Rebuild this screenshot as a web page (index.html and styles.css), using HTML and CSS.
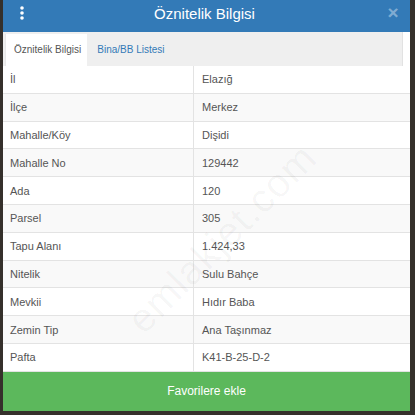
FILE: index.html
```html
<!DOCTYPE html>
<html lang="tr">
<head>
<meta charset="utf-8">
<link rel="stylesheet" href="styles.css">
</head>
<body>
<div class="modal">
  <div class="header">
    <svg class="kebab" width="8" height="14" viewBox="0 0 8 14"><circle cx="4" cy="2" r="1.8" fill="#fff"/><circle cx="4" cy="7" r="1.8" fill="#fff"/><circle cx="4" cy="12" r="1.8" fill="#fff"/></svg>
    <div class="title">Öznitelik Bilgisi</div>
    <div class="close">×</div>
  </div>
  <div class="tabs">
    <div class="tab active">Öznitelik Bilgisi</div>
    <div class="tab">Bina/BB Listesi</div>
  </div>
  <div class="table">
    <div class="row"><div class="k">İl</div><div class="v">Elazığ</div></div>
    <div class="row"><div class="k">İlçe</div><div class="v">Merkez</div></div>
    <div class="row"><div class="k">Mahalle/Köy</div><div class="v">Dişidi</div></div>
    <div class="row"><div class="k">Mahalle No</div><div class="v">129442</div></div>
    <div class="row"><div class="k">Ada</div><div class="v">120</div></div>
    <div class="row"><div class="k">Parsel</div><div class="v">305</div></div>
    <div class="row"><div class="k">Tapu Alanı</div><div class="v">1.424,33</div></div>
    <div class="row"><div class="k">Nitelik</div><div class="v">Sulu Bahçe</div></div>
    <div class="row"><div class="k">Mevkii</div><div class="v">Hıdır Baba</div></div>
    <div class="row"><div class="k">Zemin Tip</div><div class="v">Ana Taşınmaz</div></div>
    <div class="row"><div class="k">Pafta</div><div class="v">K41-B-25-D-2</div></div>
    <div class="watermark">emlakjet.com</div>
  </div>
  <div class="btn">Favorilere ekle</div>
</div>
</body>
</html>
```
FILE: styles.css
```css
html, body {
  margin: 0;
  padding: 0;
}
body {
  width: 415px;
  height: 415px;
  background: #35302b;
  font-family: "Liberation Sans", Arial, sans-serif;
  overflow: hidden;
}
.modal {
  margin: 0 5px 0 3px;
  height: 411px;
  background: #fff;
  display: flex;
  flex-direction: column;
}
.header {
  height: 32px;
  background: #337ab7;
  display: flex;
  align-items: center;
}
.kebab {
  margin-left: 15px;
  margin-top: -6px;
}
.title {
  flex: 1;
  text-align: center;
  color: #fff;
  font-size: 15px;
  margin-top: -6px;
  margin-left: 2px;
}
.close {
  width: 24px;
  color: rgba(255,255,255,0.4);
  font-size: 19px;
  font-weight: bold;
  margin-right: 5px;
  margin-top: -6px;
  text-align: center;
}
.tabs {
  height: 34px;
  background: #efefef;
  display: flex;
  align-items: flex-end;
  padding-left: 2px;
  border-right: 1px solid #e2e2e2;
  margin-right: 7px;
}
.tab {
  height: 32px;
  line-height: 32px;
  font-size: 10px;
  color: #337ab7;
  padding: 0 8px 0 10px;
  white-space: nowrap;
}
.tab.active {
  background: #fff;
  color: #555;
  padding: 0 6px 0 8px;
  border-left: 1px solid #e8e8e8;
}
.table {
  position: relative;
  overflow: hidden;
}
.row {
  display: flex;
  height: 26.8px;
  border-bottom: 1px solid #e3e3e3;
  font-size: 11px;
  color: #555;
  align-items: center;
}
.row:nth-child(even) {
  background: #f9f9f9;
}
.k {
  width: 183px;
  padding-left: 7px;
  height: 100%;
  display: flex;
  align-items: center;
  border-right: 1px solid #e3e3e3;
}
.v {
  padding-left: 8px;
}
.watermark {
  position: absolute;
  left: 95px;
  top: 150px;
  font-size: 40px;
  color: rgba(0,0,0,0.04);
  transform: rotate(-45deg);
  letter-spacing: 1px;
  pointer-events: none;
}
.btn {
  flex: 1;
  background: #5cb85c;
  color: #fff;
  font-size: 12px;
  display: flex;
  align-items: center;
  justify-content: center;
}
```
